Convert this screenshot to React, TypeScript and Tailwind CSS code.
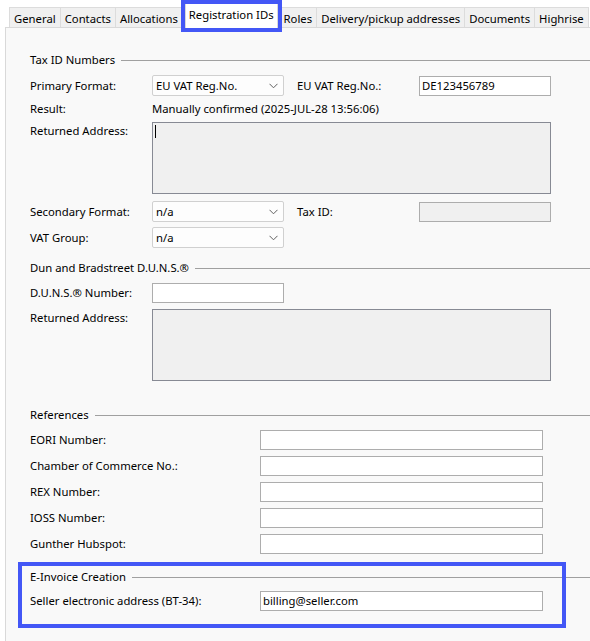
import React from 'react';

const tabs = ['General', 'Contacts', 'Allocations', 'Registration IDs', 'Roles', 'Delivery/pickup addresses', 'Documents', 'Highrise'];

const Chevron = () => (
  <svg width="9" height="6" viewBox="0 0 9 6" className="shrink-0">
    <polyline points="0.5,0.8 4.5,4.8 8.5,0.8" fill="none" stroke="#606060" strokeWidth="1" />
  </svg>
);

const Select = ({ value }: { value: string }) => (
  <div className="w-[132px] h-[21px] flex items-center justify-between pl-[3px] pr-[5px] bg-[#fdfdfd] border border-[#d0d0d0] rounded-[2px]">
    <span>{value}</span>
    <Chevron />
  </div>
);

const Input = ({ value = '', width = 'w-[132px]', disabled = false }: { value?: string; width?: string; disabled?: boolean }) => (
  <div className={`${width} h-[20px] flex items-center pl-[2px] border border-[#adadad] ${disabled ? 'bg-[#f0f0f0]' : 'bg-white'}`}>
    {value}
  </div>
);

const TextArea = ({ caret = false }: { caret?: boolean }) => (
  <div className="w-[399px] h-[72px] bg-[#f0f0f0] border border-[#878a94] pl-[2px] pt-[2px]">
    {caret && <div className="w-px h-[13px] bg-black" />}
  </div>
);

const GroupHeader = ({ title, className = '' }: { title: string; className?: string }) => (
  <div className={`h-[16px] flex items-center gap-[6px] ${className}`}>
    <span className="whitespace-nowrap">{title}</span>
    <div className="flex-1 h-px bg-[#a0a0a0]" />
  </div>
);

const Label = ({ children, width = 'w-[122px]' }: { children: React.ReactNode; width?: string }) => (
  <div className={`${width} shrink-0 whitespace-nowrap`}>{children}</div>
);

export default function App() {
  return (
    <div className="w-[590px] h-[641px] overflow-hidden bg-white text-[11.3px] leading-[16px] text-black" style={{ fontFamily: '"Noto Sans", "Open Sans", sans-serif' }}>
      {/* Tab strip */}
      <div className="flex items-end h-[27px] pl-[9px] whitespace-nowrap">
        {tabs.map(tab =>
          tab === 'Registration IDs' ? (
            <div key={tab} className="relative shrink-0 h-[25px] -mb-px mx-[2px] px-[3px] pt-[3px] bg-white border border-b-0 border-[#d9d9d9] z-10">
              {tab}
              <span className="absolute -left-[5px] -right-[5px] -top-[4px] -bottom-[4px] border-[4px] border-[#4357f6] pointer-events-none" />
            </div>
          ) : (
            <div key={tab} className="shrink-0 h-[20px] pl-[4px] pr-[4px] pt-[3px] bg-[#f0f0f0] border border-b-0 border-[#dcdcdc] -ml-px first:ml-0">
              {tab}
            </div>
          )
        )}
      </div>

      {/* Panel */}
      <div className="ml-[5px] w-[620px] h-[614px] bg-[#f9f9f9] border-l border-t border-[#d9d9d9] pl-[24px] flex flex-col">
        <GroupHeader title="Tax ID Numbers" className="mt-[24px]" />

        <div className="mt-[7px] h-[21px] flex items-center">
          <Label>Primary Format:</Label>
          <Select value="EU VAT Reg.No." />
          <Label width="w-[122px] ml-[13px]">EU VAT Reg.No.:</Label>
          <Input value="DE123456789" />
        </div>

        <div className="mt-[5px] h-[16px] flex items-center">
          <Label>Result:</Label>
          <span className="whitespace-nowrap">Manually confirmed (2025-JUL-28 13:56:06)</span>
        </div>

        <div className="mt-[5px] flex">
          <Label><div className="pt-[1px]">Returned Address:</div></Label>
          <TextArea caret />
        </div>

        <div className="mt-[7px] h-[21px] flex items-center">
          <Label>Secondary Format:</Label>
          <Select value="n/a" />
          <Label width="w-[122px] ml-[13px]">Tax ID:</Label>
          <Input disabled />
        </div>

        <div className="mt-[5px] h-[21px] flex items-center">
          <Label>VAT Group:</Label>
          <Select value="n/a" />
        </div>

        <GroupHeader title="Dun and Bradstreet D.U.N.S.®" className="mt-[12px]" />

        <div className="mt-[7px] h-[20px] flex items-center">
          <Label>D.U.N.S.® Number:</Label>
          <Input />
        </div>

        <div className="mt-[6px] flex">
          <Label><div className="pt-[1px]">Returned Address:</div></Label>
          <TextArea />
        </div>

        <GroupHeader title="References" className="mt-[26px]" />

        {['EORI Number:', 'Chamber of Commerce No.:', 'REX Number:', 'IOSS Number:', 'Gunther Hubspot:'].map((l, i) => (
          <div key={l} className={`${i === 0 ? 'mt-[7px]' : 'mt-[6px]'} h-[20px] flex items-center`}>
            <Label width="w-[230px]">{l}</Label>
            <Input width="w-[283px]" />
          </div>
        ))}

        <div className="relative mt-[15px]">
          <GroupHeader title="E-Invoice Creation" />
          <div className="mt-[6px] h-[20px] flex items-center">
            <Label width="w-[230px]">Seller electronic address (BT-34):</Label>
            <Input width="w-[283px]" value="billing@seller.com" />
          </div>
          <span className="absolute left-[-12px] top-[-7px] w-[548px] h-[66px] border-[4px] border-[#4357f6] pointer-events-none" />
        </div>
      </div>
    </div>
  );
}
